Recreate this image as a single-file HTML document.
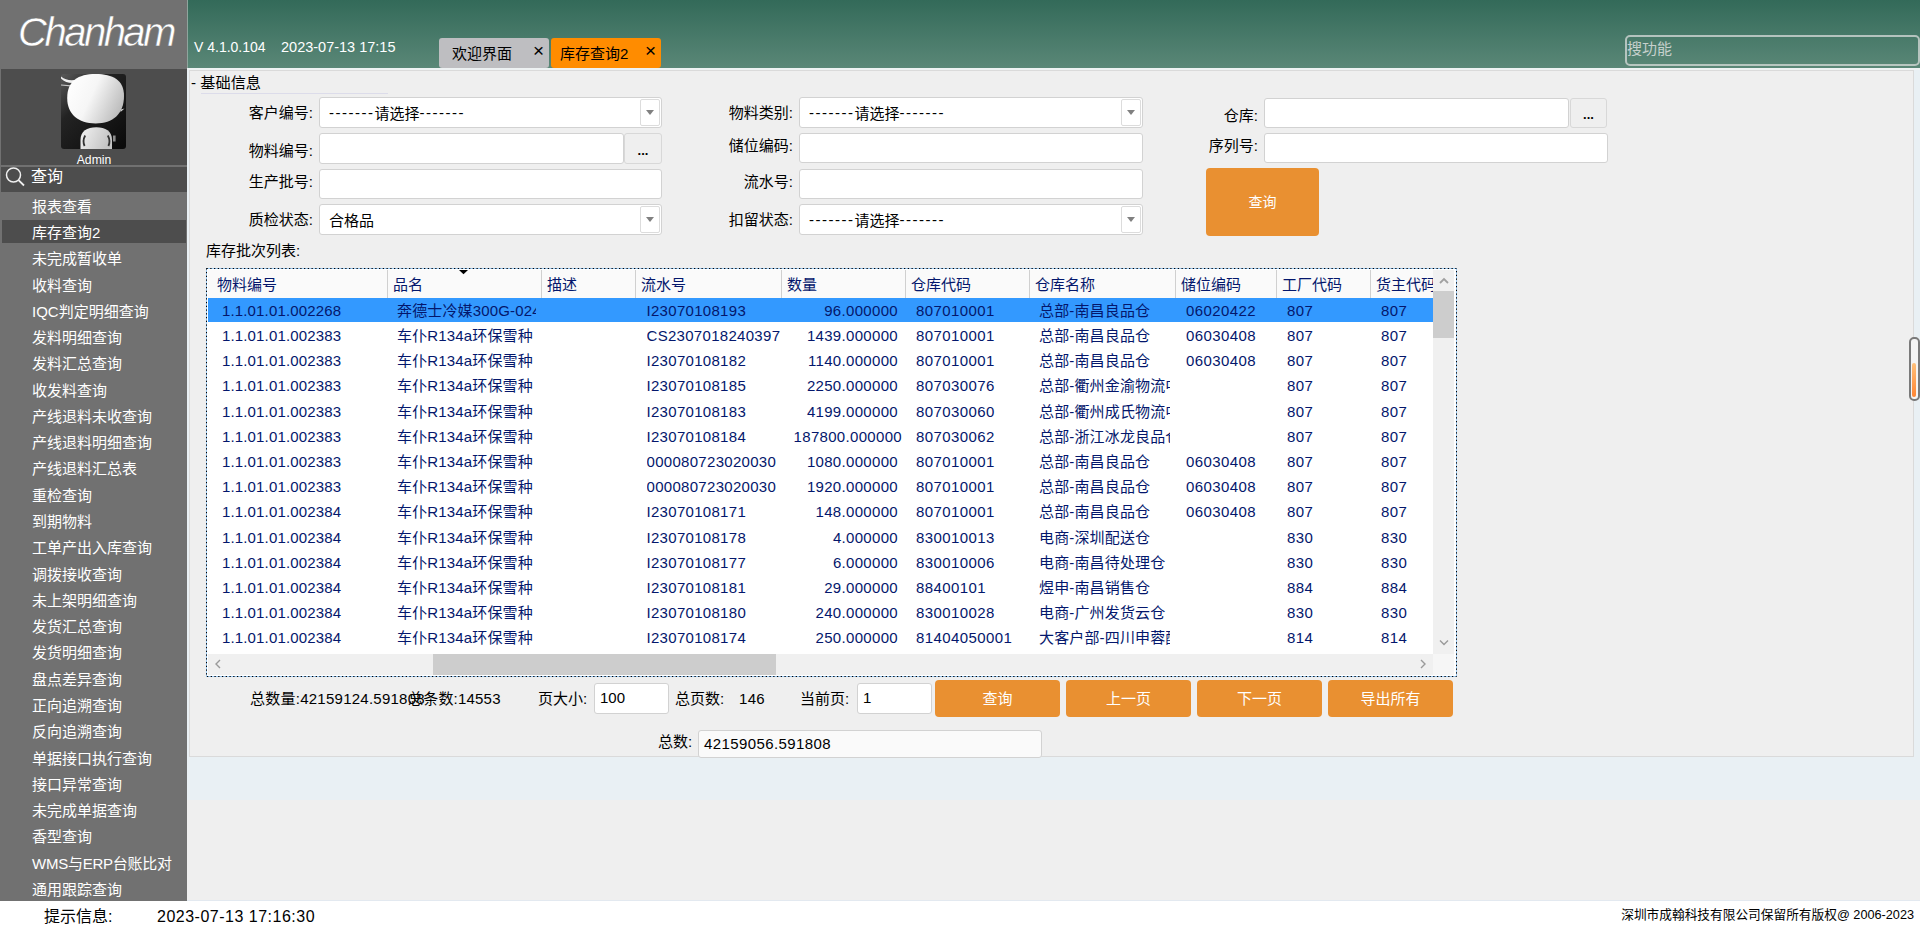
<!DOCTYPE html><html lang="zh"><head><meta charset="utf-8"><title>Chanham</title><style>
*{box-sizing:border-box;margin:0;padding:0}
html,body{width:1920px;height:931px;overflow:hidden;background:#efefef}
body{position:relative;font-family:"Liberation Sans","Noto Sans CJK SC",sans-serif;font-size:15px;color:#000}
.abs{position:absolute}
#side{left:0;top:0;width:187px;height:901px;background:#717171}
#logo{left:18px;top:8.6px;font-style:italic;font-size:40px;color:#fff;letter-spacing:-2.5px;line-height:46px;white-space:nowrap;-webkit-text-stroke:0.45px #717171}
#avp{left:1px;top:69px;width:186px;height:96px;background:#4d4d4d}
#qh{left:1px;top:167px;width:186px;height:25px;background:#4d4d4d}
.mi{position:absolute;left:32px;height:26px;line-height:26px;color:#fff;font-size:15px;white-space:nowrap}
#hdr{left:188px;top:0;width:1732px;height:68px;background:linear-gradient(#336a59,#5a8777)}
#ver{left:194px;top:38px;color:#fff;font-size:14.35px;line-height:18px;white-space:pre}
.tab{position:absolute;top:38px;height:30px;width:110px;border-radius:3px;font-size:15px;line-height:32px;white-space:nowrap}
.tab .x{position:absolute;left:94px;top:-2px;font-size:19px;line-height:30px}
#srch{left:1625px;top:35px;width:295px;height:31px;border:2px solid rgba(208,214,211,.8);border-radius:5px;color:#c6d0cc;font-size:15px;line-height:24px;padding-left:0}
#panel{left:189px;top:70px;width:1725px;height:687px;background:#efefef;border:1px solid #dadada}
#rstrip{left:1914px;top:70px;width:6px;height:730px;background:#e9f0f4}
#band{left:187px;top:757px;width:1733px;height:43px;background:#e9f0f4}
#status{left:0;top:901px;width:1920px;height:30px;background:#fff}
.lbl{position:absolute;text-align:right;white-space:nowrap;font-size:15px;line-height:20px}
.inp{position:absolute;background:#fff;border:1px solid #d2d2d2;border-radius:3px;font-size:15px;white-space:nowrap;overflow:hidden}
.inp .t{position:absolute;left:5px;top:50%;transform:translateY(-50%);line-height:20px;margin-top:-0.5px}
.cmb .t{left:9px;margin-top:1px}
.cmb .ar{position:absolute;right:1px;top:1px;bottom:1px;width:20px;border:1px solid #dcdcdc;border-radius:2px}
.cmb .ar:after{content:"";position:absolute;left:5px;top:10px;border:4px solid transparent;border-top:5px solid #808080;border-bottom:0}
.ds{letter-spacing:1.5px;position:relative;top:-1px}
.dots{position:absolute;background:#efefef;border:1px solid #d8d8d8;border-radius:3px;text-align:center;font-weight:bold;font-size:13px}
.btn{position:absolute;background:#e99031;border-radius:4px;color:#fff;font-size:15px;text-align:center}
#grid{left:206px;top:268px;width:1251px;height:409px;border:1px solid #9ccbf5;background:#fff}
.th{position:absolute;top:270px;height:28px;line-height:29px;font-size:15px;color:#04176c;background:#fafafa;border-left:1px solid #d0d0d0;padding-left:5px;white-space:nowrap;overflow:hidden}
.td{position:absolute;height:24px;line-height:24px;font-size:15px;color:#04176c;white-space:nowrap;overflow:hidden;letter-spacing:.15px}
.pg{position:absolute;line-height:20px;white-space:pre;font-size:15px;margin-top:.6px}
</style></head><body>
<div id="side" class="abs"></div>
<div class="abs" style="left:187px;top:0;width:1px;height:68px;background:#8fa59d"></div>
<div id="logo" class="abs">Chanham</div>
<div id="avp" class="abs"></div>
<svg class="abs" style="left:61px;top:74px" width="65" height="75" viewBox="0 0 65 75"><defs><linearGradient id="ag" x1="0" y1="0" x2="0.9" y2="1"><stop offset="0" stop-color="#5a5a5a"/><stop offset="0.35" stop-color="#232323"/><stop offset="1" stop-color="#0b0b0b"/></linearGradient><linearGradient id="hg" x1="0" y1="0.2" x2="1" y2="0.6"><stop offset="0" stop-color="#ffffff"/><stop offset="0.45" stop-color="#f6f6f6"/><stop offset="1" stop-color="#bcbcbc"/></linearGradient><linearGradient id="bg2" x1="0" y1="0" x2="1" y2="0.3"><stop offset="0" stop-color="#f2f2f2"/><stop offset="1" stop-color="#c4c4c4"/></linearGradient><clipPath id="ac"><rect width="65" height="75" rx="3"/></clipPath></defs><g clip-path="url(#ac)"><rect width="65" height="75" fill="url(#ag)"/><path d="M0 2.5 Q7 8 16 5.5 L13 9 Q5 9.5 0 4.5 Z" fill="#f0f0f0"/><path d="M0 11 L10 11.8" stroke="#c8c8c8" stroke-width="1.2"/><path d="M34.6 0 C52 0 63 6 63 22 C63 40 52 49.4 34.6 49.4 C17 49.4 6.2 40 6.2 24 C6.2 7 17 0 34.6 0 Z" fill="url(#hg)"/><path d="M60 35.5 l3.5 -1 l-4 3.5z" fill="#d8d8d8"/><path d="M19.5 75 L19.5 66 C19.5 57 26 53.3 35.3 53.3 C44.5 53.3 51 57 51 66 L51 75 Z" fill="url(#bg2)"/><path d="M24.2 61.5 q-3 5.5 -0.6 10.5" stroke="#333" stroke-width="1.8" fill="none"/><path d="M46.8 61.5 q3 5.5 0.6 10.5" stroke="#333" stroke-width="1.8" fill="none"/><rect x="52" y="61.5" width="2.6" height="6" fill="#8c8c8c"/></g></svg>
<div class="abs" style="left:1px;top:152px;width:186px;text-align:center;color:#fff;font-size:12.2px;line-height:16px">Admin</div>
<div id="qh" class="abs"></div>
<svg class="abs" style="left:3px;top:165px" width="24" height="24" viewBox="0 0 24 24"><circle cx="10.5" cy="10" r="7" fill="none" stroke="#f0f0f0" stroke-width="1.5"/><path d="M15.5 15.2 L21 20.5" stroke="#f0f0f0" stroke-width="1.8"/></svg>
<div class="abs" style="left:31px;top:165px;color:#fff;font-size:16px;line-height:24px">查询</div>
<div class="abs" style="left:2px;top:220px;width:184px;height:23px;background:#4d4d4d"></div>
<div class="mi" style="top:193.6px">报表查看</div>
<div class="mi" style="top:219.9px">库存查询2</div>
<div class="mi" style="top:246.2px">未完成暂收单</div>
<div class="mi" style="top:272.5px">收料查询</div>
<div class="mi" style="top:298.7px">IQC判定明细查询</div>
<div class="mi" style="top:325.0px">发料明细查询</div>
<div class="mi" style="top:351.3px">发料汇总查询</div>
<div class="mi" style="top:377.6px">收发料查询</div>
<div class="mi" style="top:403.9px">产线退料未收查询</div>
<div class="mi" style="top:430.2px">产线退料明细查询</div>
<div class="mi" style="top:456.4px">产线退料汇总表</div>
<div class="mi" style="top:482.7px">重检查询</div>
<div class="mi" style="top:509.0px">到期物料</div>
<div class="mi" style="top:535.3px">工单产出入库查询</div>
<div class="mi" style="top:561.6px">调拨接收查询</div>
<div class="mi" style="top:587.9px">未上架明细查询</div>
<div class="mi" style="top:614.2px">发货汇总查询</div>
<div class="mi" style="top:640.4px">发货明细查询</div>
<div class="mi" style="top:666.7px">盘点差异查询</div>
<div class="mi" style="top:693.0px">正向追溯查询</div>
<div class="mi" style="top:719.3px">反向追溯查询</div>
<div class="mi" style="top:745.6px">单据接口执行查询</div>
<div class="mi" style="top:771.9px">接口异常查询</div>
<div class="mi" style="top:798.2px">未完成单据查询</div>
<div class="mi" style="top:824.4px">香型查询</div>
<div class="mi" style="top:850.7px;letter-spacing:-.25px">WMS与ERP台账比对</div>
<div class="mi" style="top:877.0px">通用跟踪查询</div>
<div id="hdr" class="abs"></div>
<div id="ver" class="abs" style="font-size:14px">V 4.1.0.104</div>
<div id="ver2" class="abs" style="left:281px;top:38px;color:#fff;font-size:14.5px;line-height:18px;white-space:pre">2023-07-13 17:15</div>
<div class="tab" style="left:439px;background:#bebec1;padding-left:13px">欢迎界面<span class="x">×</span></div>
<div class="tab" style="left:551px;background:#ff8c00;padding-left:9px">库存查询2<span class="x">×</span></div>
<div id="srch" class="abs">搜功能</div>
<div class="abs" style="left:187px;top:68px;width:1733px;height:2px;background:#eef2f3"></div>
<div class="abs" style="left:187px;top:70px;width:2px;height:730px;background:#e9f0f4"></div>
<div id="panel" class="abs"></div><div id="rstrip" class="abs"></div><div id="band" class="abs"></div>
<div class="abs" style="left:191px;top:73px;font-size:15.2px;line-height:20px;white-space:pre">- 基础信息</div>
<div class="abs" style="left:201px;top:93px;width:187px;height:1px;background:#dcdcea"></div>
<div class="lbl" style="left:193px;width:120px;top:103.0px">客户编号:</div>
<div class="inp cmb" style="left:319px;top:97px;width:343px;height:31px"><span class="t"><span class="ds">-------</span>请选择<span class="ds">-------</span></span><span class="ar"></span></div>
<div class="lbl" style="left:193px;width:120px;top:140.5px">物料编号:</div>
<div class="inp" style="left:319px;top:133px;width:305px;height:31px;"><span class="t"></span></div>
<div class="dots" style="left:624px;top:133px;width:38px;height:31px;line-height:33px">...</div>
<div class="lbl" style="left:193px;width:120px;top:172.0px">生产批号:</div>
<div class="inp" style="left:319px;top:169px;width:343px;height:30px;"><span class="t"></span></div>
<div class="lbl" style="left:193px;width:120px;top:209.5px">质检状态:</div>
<div class="inp cmb" style="left:319px;top:204px;width:343px;height:31px"><span class="t">合格品</span><span class="ar"></span></div>
<div class="lbl" style="left:673px;width:120px;top:103.0px">物料类别:</div>
<div class="inp cmb" style="left:799px;top:97px;width:344px;height:31px"><span class="t"><span class="ds">-------</span>请选择<span class="ds">-------</span></span><span class="ar"></span></div>
<div class="lbl" style="left:673px;width:120px;top:136.0px">储位编码:</div>
<div class="inp" style="left:799px;top:133px;width:344px;height:30px;"><span class="t"></span></div>
<div class="lbl" style="left:673px;width:120px;top:172.0px">流水号:</div>
<div class="inp" style="left:799px;top:169px;width:344px;height:30px;"><span class="t"></span></div>
<div class="lbl" style="left:673px;width:120px;top:209.5px">扣留状态:</div>
<div class="inp cmb" style="left:799px;top:204px;width:344px;height:31px"><span class="t"><span class="ds">-------</span>请选择<span class="ds">-------</span></span><span class="ar"></span></div>
<div class="lbl" style="left:1138px;width:120px;top:106.0px">仓库:</div>
<div class="inp" style="left:1264px;top:98px;width:305px;height:30px;"><span class="t"></span></div>
<div class="dots" style="left:1570px;top:98px;width:37px;height:30px;line-height:32px">...</div>
<div class="lbl" style="left:1138px;width:120px;top:136.0px">序列号:</div>
<div class="inp" style="left:1264px;top:133px;width:344px;height:30px;"><span class="t"></span></div>
<div class="btn" style="left:1206px;top:168px;width:113px;height:68px;line-height:69px;font-size:14px">查询</div>
<div class="abs" style="left:206px;top:241px;line-height:20px;font-size:15px">库存批次列表:</div>
<div id="grid" class="abs"></div>
<svg class="abs" style="left:206px;top:268px" width="1251" height="409"><rect x="0.5" y="0.5" width="1250" height="408" fill="none" stroke="#000" stroke-width="1" stroke-dasharray="1.3 2.45"/></svg>
<div class="abs" style="left:208px;top:270px;width:1226px;height:28px;background:#fafafa"></div>
<div class="th" style="left:209px;width:178px;padding-left:7px">物料编号</div>
<div class="th" style="left:387px;width:154px">品名</div>
<div class="th" style="left:541px;width:94px">描述</div>
<div class="th" style="left:635px;width:146px">流水号</div>
<div class="th" style="left:781px;width:124px">数量</div>
<div class="th" style="left:905px;width:124px">仓库代码</div>
<div class="th" style="left:1029px;width:146px">仓库名称</div>
<div class="th" style="left:1175px;width:101px">储位编码</div>
<div class="th" style="left:1276px;width:94px">工厂代码</div>
<div class="th" style="left:1370px;width:63px">货主代码</div>
<div class="abs" style="left:208px;top:270px;width:3px;height:28px;background:#fafafa"></div>
<svg class="abs" style="left:458px;top:269px" width="11" height="6"><path d="M1 1 L10 1 L5.5 5.2 Z" fill="#000"/></svg>
<div class="abs" style="left:208px;top:298px;width:1226px;height:24px;background:#3399ff"></div>
<div class="td" style="left:222.0px;top:298.6px;width:160px;">1.1.01.01.002268</div>
<div class="td" style="left:397.0px;top:298.6px;width:139px;">奔德士冷媒300G-024</div>
<div class="td" style="left:646.5px;top:298.6px;width:133px;letter-spacing:.3px;">I23070108193</div>
<div class="td" style="left:785.0px;top:298.6px;width:113px;text-align:right;letter-spacing:.32px;">96.000000</div>
<div class="td" style="left:916.0px;top:298.6px;width:108px;letter-spacing:.42px;">807010001</div>
<div class="td" style="left:1039.0px;top:298.6px;width:131px;">总部-南昌良品仓</div>
<div class="td" style="left:1186.0px;top:298.6px;width:85px;letter-spacing:.42px;">06020422</div>
<div class="td" style="left:1287.0px;top:298.6px;width:78px;letter-spacing:.42px;">807</div>
<div class="td" style="left:1381.0px;top:298.6px;width:47px;letter-spacing:.42px;">807</div>
<div class="td" style="left:222.0px;top:323.6px;width:160px;">1.1.01.01.002383</div>
<div class="td" style="left:397.0px;top:323.6px;width:139px;">车仆R134a环保雪种</div>
<div class="td" style="left:646.5px;top:323.6px;width:133px;letter-spacing:.3px;">CS2307018240397</div>
<div class="td" style="left:785.0px;top:323.6px;width:113px;text-align:right;letter-spacing:.32px;">1439.000000</div>
<div class="td" style="left:916.0px;top:323.6px;width:108px;letter-spacing:.42px;">807010001</div>
<div class="td" style="left:1039.0px;top:323.6px;width:131px;">总部-南昌良品仓</div>
<div class="td" style="left:1186.0px;top:323.6px;width:85px;letter-spacing:.42px;">06030408</div>
<div class="td" style="left:1287.0px;top:323.6px;width:78px;letter-spacing:.42px;">807</div>
<div class="td" style="left:1381.0px;top:323.6px;width:47px;letter-spacing:.42px;">807</div>
<div class="td" style="left:222.0px;top:348.6px;width:160px;">1.1.01.01.002383</div>
<div class="td" style="left:397.0px;top:348.6px;width:139px;">车仆R134a环保雪种</div>
<div class="td" style="left:646.5px;top:348.6px;width:133px;letter-spacing:.3px;">I23070108182</div>
<div class="td" style="left:785.0px;top:348.6px;width:113px;text-align:right;letter-spacing:.32px;">1140.000000</div>
<div class="td" style="left:916.0px;top:348.6px;width:108px;letter-spacing:.42px;">807010001</div>
<div class="td" style="left:1039.0px;top:348.6px;width:131px;">总部-南昌良品仓</div>
<div class="td" style="left:1186.0px;top:348.6px;width:85px;letter-spacing:.42px;">06030408</div>
<div class="td" style="left:1287.0px;top:348.6px;width:78px;letter-spacing:.42px;">807</div>
<div class="td" style="left:1381.0px;top:348.6px;width:47px;letter-spacing:.42px;">807</div>
<div class="td" style="left:222.0px;top:373.8px;width:160px;">1.1.01.01.002383</div>
<div class="td" style="left:397.0px;top:373.8px;width:139px;">车仆R134a环保雪种</div>
<div class="td" style="left:646.5px;top:373.8px;width:133px;letter-spacing:.3px;">I23070108185</div>
<div class="td" style="left:785.0px;top:373.8px;width:113px;text-align:right;letter-spacing:.32px;">2250.000000</div>
<div class="td" style="left:916.0px;top:373.8px;width:108px;letter-spacing:.42px;">807030076</div>
<div class="td" style="left:1039.0px;top:373.8px;width:131px;">总部-衢州金渝物流中心</div>
<div class="td" style="left:1287.0px;top:373.8px;width:78px;letter-spacing:.42px;">807</div>
<div class="td" style="left:1381.0px;top:373.8px;width:47px;letter-spacing:.42px;">807</div>
<div class="td" style="left:222.0px;top:399.6px;width:160px;">1.1.01.01.002383</div>
<div class="td" style="left:397.0px;top:399.6px;width:139px;">车仆R134a环保雪种</div>
<div class="td" style="left:646.5px;top:399.6px;width:133px;letter-spacing:.3px;">I23070108183</div>
<div class="td" style="left:785.0px;top:399.6px;width:113px;text-align:right;letter-spacing:.32px;">4199.000000</div>
<div class="td" style="left:916.0px;top:399.6px;width:108px;letter-spacing:.42px;">807030060</div>
<div class="td" style="left:1039.0px;top:399.6px;width:131px;">总部-衢州成氏物流中心</div>
<div class="td" style="left:1287.0px;top:399.6px;width:78px;letter-spacing:.42px;">807</div>
<div class="td" style="left:1381.0px;top:399.6px;width:47px;letter-spacing:.42px;">807</div>
<div class="td" style="left:222.0px;top:424.6px;width:160px;">1.1.01.01.002383</div>
<div class="td" style="left:397.0px;top:424.6px;width:139px;">车仆R134a环保雪种</div>
<div class="td" style="left:646.5px;top:424.6px;width:133px;letter-spacing:.3px;">I23070108184</div>
<div class="td" style="left:785.0px;top:424.6px;width:117px;text-align:right;letter-spacing:.32px;">187800.000000</div>
<div class="td" style="left:916.0px;top:424.6px;width:108px;letter-spacing:.42px;">807030062</div>
<div class="td" style="left:1039.0px;top:424.6px;width:131px;">总部-浙江冰龙良品仓</div>
<div class="td" style="left:1287.0px;top:424.6px;width:78px;letter-spacing:.42px;">807</div>
<div class="td" style="left:1381.0px;top:424.6px;width:47px;letter-spacing:.42px;">807</div>
<div class="td" style="left:222.0px;top:449.6px;width:160px;">1.1.01.01.002383</div>
<div class="td" style="left:397.0px;top:449.6px;width:139px;">车仆R134a环保雪种</div>
<div class="td" style="left:646.5px;top:449.6px;width:133px;letter-spacing:.3px;">000080723020030</div>
<div class="td" style="left:785.0px;top:449.6px;width:113px;text-align:right;letter-spacing:.32px;">1080.000000</div>
<div class="td" style="left:916.0px;top:449.6px;width:108px;letter-spacing:.42px;">807010001</div>
<div class="td" style="left:1039.0px;top:449.6px;width:131px;">总部-南昌良品仓</div>
<div class="td" style="left:1186.0px;top:449.6px;width:85px;letter-spacing:.42px;">06030408</div>
<div class="td" style="left:1287.0px;top:449.6px;width:78px;letter-spacing:.42px;">807</div>
<div class="td" style="left:1381.0px;top:449.6px;width:47px;letter-spacing:.42px;">807</div>
<div class="td" style="left:222.0px;top:475.1px;width:160px;">1.1.01.01.002383</div>
<div class="td" style="left:397.0px;top:475.1px;width:139px;">车仆R134a环保雪种</div>
<div class="td" style="left:646.5px;top:475.1px;width:133px;letter-spacing:.3px;">000080723020030</div>
<div class="td" style="left:785.0px;top:475.1px;width:113px;text-align:right;letter-spacing:.32px;">1920.000000</div>
<div class="td" style="left:916.0px;top:475.1px;width:108px;letter-spacing:.42px;">807010001</div>
<div class="td" style="left:1039.0px;top:475.1px;width:131px;">总部-南昌良品仓</div>
<div class="td" style="left:1186.0px;top:475.1px;width:85px;letter-spacing:.42px;">06030408</div>
<div class="td" style="left:1287.0px;top:475.1px;width:78px;letter-spacing:.42px;">807</div>
<div class="td" style="left:1381.0px;top:475.1px;width:47px;letter-spacing:.42px;">807</div>
<div class="td" style="left:222.0px;top:500.1px;width:160px;">1.1.01.01.002384</div>
<div class="td" style="left:397.0px;top:500.1px;width:139px;">车仆R134a环保雪种</div>
<div class="td" style="left:646.5px;top:500.1px;width:133px;letter-spacing:.3px;">I23070108171</div>
<div class="td" style="left:785.0px;top:500.1px;width:113px;text-align:right;letter-spacing:.32px;">148.000000</div>
<div class="td" style="left:916.0px;top:500.1px;width:108px;letter-spacing:.42px;">807010001</div>
<div class="td" style="left:1039.0px;top:500.1px;width:131px;">总部-南昌良品仓</div>
<div class="td" style="left:1186.0px;top:500.1px;width:85px;letter-spacing:.42px;">06030408</div>
<div class="td" style="left:1287.0px;top:500.1px;width:78px;letter-spacing:.42px;">807</div>
<div class="td" style="left:1381.0px;top:500.1px;width:47px;letter-spacing:.42px;">807</div>
<div class="td" style="left:222.0px;top:525.6px;width:160px;">1.1.01.01.002384</div>
<div class="td" style="left:397.0px;top:525.6px;width:139px;">车仆R134a环保雪种</div>
<div class="td" style="left:646.5px;top:525.6px;width:133px;letter-spacing:.3px;">I23070108178</div>
<div class="td" style="left:785.0px;top:525.6px;width:113px;text-align:right;letter-spacing:.32px;">4.000000</div>
<div class="td" style="left:916.0px;top:525.6px;width:108px;letter-spacing:.42px;">830010013</div>
<div class="td" style="left:1039.0px;top:525.6px;width:131px;">电商-深圳配送仓</div>
<div class="td" style="left:1287.0px;top:525.6px;width:78px;letter-spacing:.42px;">830</div>
<div class="td" style="left:1381.0px;top:525.6px;width:47px;letter-spacing:.42px;">830</div>
<div class="td" style="left:222.0px;top:551.1px;width:160px;">1.1.01.01.002384</div>
<div class="td" style="left:397.0px;top:551.1px;width:139px;">车仆R134a环保雪种</div>
<div class="td" style="left:646.5px;top:551.1px;width:133px;letter-spacing:.3px;">I23070108177</div>
<div class="td" style="left:785.0px;top:551.1px;width:113px;text-align:right;letter-spacing:.32px;">6.000000</div>
<div class="td" style="left:916.0px;top:551.1px;width:108px;letter-spacing:.42px;">830010006</div>
<div class="td" style="left:1039.0px;top:551.1px;width:131px;">电商-南昌待处理仓</div>
<div class="td" style="left:1287.0px;top:551.1px;width:78px;letter-spacing:.42px;">830</div>
<div class="td" style="left:1381.0px;top:551.1px;width:47px;letter-spacing:.42px;">830</div>
<div class="td" style="left:222.0px;top:576.4px;width:160px;">1.1.01.01.002384</div>
<div class="td" style="left:397.0px;top:576.4px;width:139px;">车仆R134a环保雪种</div>
<div class="td" style="left:646.5px;top:576.4px;width:133px;letter-spacing:.3px;">I23070108181</div>
<div class="td" style="left:785.0px;top:576.4px;width:113px;text-align:right;letter-spacing:.32px;">29.000000</div>
<div class="td" style="left:916.0px;top:576.4px;width:108px;letter-spacing:.42px;">88400101</div>
<div class="td" style="left:1039.0px;top:576.4px;width:131px;">煜申-南昌销售仓</div>
<div class="td" style="left:1287.0px;top:576.4px;width:78px;letter-spacing:.42px;">884</div>
<div class="td" style="left:1381.0px;top:576.4px;width:47px;letter-spacing:.42px;">884</div>
<div class="td" style="left:222.0px;top:601.4px;width:160px;">1.1.01.01.002384</div>
<div class="td" style="left:397.0px;top:601.4px;width:139px;">车仆R134a环保雪种</div>
<div class="td" style="left:646.5px;top:601.4px;width:133px;letter-spacing:.3px;">I23070108180</div>
<div class="td" style="left:785.0px;top:601.4px;width:113px;text-align:right;letter-spacing:.32px;">240.000000</div>
<div class="td" style="left:916.0px;top:601.4px;width:108px;letter-spacing:.42px;">830010028</div>
<div class="td" style="left:1039.0px;top:601.4px;width:131px;">电商-广州发货云仓</div>
<div class="td" style="left:1287.0px;top:601.4px;width:78px;letter-spacing:.42px;">830</div>
<div class="td" style="left:1381.0px;top:601.4px;width:47px;letter-spacing:.42px;">830</div>
<div class="td" style="left:222.0px;top:626.4px;width:160px;">1.1.01.01.002384</div>
<div class="td" style="left:397.0px;top:626.4px;width:139px;">车仆R134a环保雪种</div>
<div class="td" style="left:646.5px;top:626.4px;width:133px;letter-spacing:.3px;">I23070108174</div>
<div class="td" style="left:785.0px;top:626.4px;width:113px;text-align:right;letter-spacing:.32px;">250.000000</div>
<div class="td" style="left:916.0px;top:626.4px;width:108px;letter-spacing:.42px;">81404050001</div>
<div class="td" style="left:1039.0px;top:626.4px;width:131px;">大客户部-四川申蓉配件仓</div>
<div class="td" style="left:1287.0px;top:626.4px;width:78px;letter-spacing:.42px;">814</div>
<div class="td" style="left:1381.0px;top:626.4px;width:47px;letter-spacing:.42px;">814</div>
<div class="abs" style="left:1433px;top:270px;width:21px;height:384px;background:#f0f0f0"></div>
<div class="abs" style="left:1433px;top:291px;width:21px;height:47px;background:#cdcdcd"></div>
<svg class="abs" style="left:1438px;top:276px" width="12" height="10"><path d="M2 7 L6 3 L10 7" fill="none" stroke="#a0a0a0" stroke-width="1.8"/></svg>
<svg class="abs" style="left:1438px;top:638px" width="12" height="10"><path d="M2 2.5 L6 6.5 L10 2.5" fill="none" stroke="#9a9a9a" stroke-width="1.4"/></svg>
<div class="abs" style="left:208px;top:654px;width:1225px;height:21px;background:#f0f0f0"></div>
<div class="abs" style="left:1433px;top:654px;width:21px;height:21px;background:#f6f6f6"></div>
<div class="abs" style="left:433px;top:654px;width:343px;height:21px;background:#cdcdcd"></div>
<svg class="abs" style="left:213px;top:658px" width="10" height="12"><path d="M7 2 L3 6 L7 10" fill="none" stroke="#9a9a9a" stroke-width="1.4"/></svg>
<svg class="abs" style="left:1418px;top:658px" width="10" height="12"><path d="M3 2 L7 6 L3 10" fill="none" stroke="#9a9a9a" stroke-width="1.4"/></svg>
<div class="pg" style="left:250px;top:688px;letter-spacing:.25px">总数量:42159124.591808</div>
<div class="pg" style="left:408px;top:688px;letter-spacing:.2px">总条数:14553</div>
<div class="pg" style="left:538px;top:688px">页大小:</div>
<div class="inp" style="left:594px;top:683px;width:75px;height:31px;"><span class="t">100</span></div>
<div class="pg" style="left:675px;top:688px">总页数:</div>
<div class="pg" style="left:739px;top:688px;letter-spacing:.3px">146</div>
<div class="pg" style="left:800px;top:688px">当前页:</div>
<div class="inp" style="left:857px;top:683px;width:75px;height:31px;"><span class="t">1</span></div>
<div class="btn" style="left:935px;top:680px;width:125px;height:37px;line-height:37px">查询</div>
<div class="btn" style="left:1066px;top:680px;width:125px;height:37px;line-height:37px">上一页</div>
<div class="btn" style="left:1197px;top:680px;width:125px;height:37px;line-height:37px">下一页</div>
<div class="btn" style="left:1328px;top:680px;width:125px;height:37px;line-height:37px">导出所有</div>
<div class="pg" style="left:658px;top:731px">总数:</div>
<div class="inp" style="left:698px;top:730px;width:344px;height:28px;background:#fafafa;letter-spacing:.4px;"><span class="t">42159056.591808</span></div>
<div class="abs" style="left:1909px;top:337px;width:11px;height:64px;border:2px solid #7a7a7a;border-radius:5px;background:#f4f4f4"></div>
<div class="abs" style="left:1912px;top:363px;width:4px;height:34px;border-radius:2px;background:linear-gradient(#ffc07a,#ff8533)"></div>
<div id="status" class="abs"></div>
<div class="abs" style="left:187px;top:900px;width:1733px;height:1px;background:#e3e9f0"></div>
<div class="abs" style="left:44px;top:906px;font-size:16px;line-height:22px;white-space:nowrap">提示信息:</div>
<div class="abs" style="left:157px;top:906px;font-size:16px;line-height:22px;white-space:nowrap;letter-spacing:.5px">2023-07-13 17:16:30</div>
<div class="abs" style="right:6px;top:906px;font-size:12.7px;line-height:18px;white-space:nowrap">深圳市成翰科技有限公司保留所有版权@ 2006-2023</div>
</body></html>
